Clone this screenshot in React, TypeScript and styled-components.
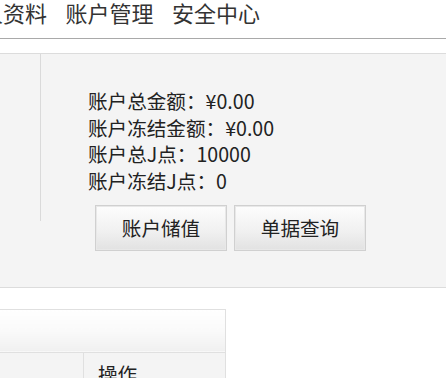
import React from "react";
import styled, { createGlobalStyle } from "styled-components";

const GlobalStyle = createGlobalStyle`
    html, body {
        margin: 0;
        padding: 0;
        background: #fff;
        overflow: hidden;
    }
    body {
        font-family: "Noto Sans CJK SC", "Noto Sans", sans-serif;
        color: #333;
    }
`;

const Page = styled.div`
    width: 446px;
    height: 378px;
    overflow: hidden;
`;

const NavBar = styled.nav`
    height: 39px;
    border-bottom: 1px solid #a9a9a9;
    display: flex;
    align-items: flex-start;
    box-sizing: border-box;
    margin-left: -41px;
    gap: 18.5px;
    white-space: nowrap;
`;

const NavItem = styled.span`
    font-size: 22px;
    line-height: 24px;
    color: #333;
    cursor: pointer;
`;

const Panel = styled.section`
    margin-top: 14px;
    background: #f4f4f4;
    border-top: 1px solid #dcdcdc;
    border-bottom: 1px solid #dcdcdc;
    display: flex;
    align-items: flex-start;
`;

const Side = styled.div`
    width: 40px;
    height: 167px;
    border-right: 1px solid #dadada;
    flex-shrink: 0;
`;

const Info = styled.div`
    padding: 34px 0 36px 47px;
`;

const Line = styled.div`
    font-size: 19.6px;
    line-height: 26.6px;
    color: #222;
    white-space: nowrap;
`;

const Buttons = styled.div`
    display: flex;
    gap: 7px;
    margin: 10.6px 0 0 7px;
`;

const Button = styled.button`
    width: 132px;
    height: 46px;
    box-sizing: border-box;
    border: 1px solid #d0d0d0;
    box-shadow: inset 0 0 0 1px #e8e8e8;
    background: linear-gradient(to bottom, #fdfdfd 0%, #f1f1f1 55%, #e2e2e2 100%);
    font-family: inherit;
    font-size: 19.6px;
    color: #222;
    padding: 0;
    cursor: pointer;
`;

const TableWrap = styled.div`
    margin: 21px 0 0 -20px;
    width: 246px;
`;

const Table = styled.table`
    width: 100%;
    border-collapse: collapse;
    border: 1px solid #e0e0e0;
`;

const TitleCell = styled.th`
    height: 42px;
    padding: 0;
    background: linear-gradient(to bottom, #ffffff 0%, #fafafa 50%, #f0f0f0 100%);
    border-bottom: 1px solid #e0e0e0;
`;

const HeadCell = styled.td<{ $w?: number }>`
    width: ${(p) => (p.$w ? `${p.$w}px` : "auto")};
    height: 40px;
    background: #f4f4f4;
    border-right: 1px solid #e0e0e0;
    padding: 8px 0 0 14px;
    vertical-align: top;
    font-size: 19.6px;
    line-height: 26px;
    color: #222;
`;

const App = () => {
    return (
        <Page>
            <GlobalStyle />
            <NavBar>
                <NavItem>个人资料</NavItem>
                <NavItem>账户管理</NavItem>
                <NavItem>安全中心</NavItem>
            </NavBar>
            <Panel>
                <Side />
                <Info>
                    <Line>账户总金额：¥0.00</Line>
                    <Line>账户冻结金额：¥0.00</Line>
                    <Line>账户总J点：10000</Line>
                    <Line>账户冻结J点：0</Line>
                    <Buttons>
                        <Button>账户储值</Button>
                        <Button>单据查询</Button>
                    </Buttons>
                </Info>
            </Panel>
            <TableWrap>
                <Table>
                    <thead>
                        <tr>
                            <TitleCell colSpan={2} />
                        </tr>
                    </thead>
                    <tbody>
                        <tr>
                            <HeadCell $w={88}></HeadCell>
                            <HeadCell>操作</HeadCell>
                        </tr>
                    </tbody>
                </Table>
            </TableWrap>
        </Page>
    );
};

export default App;
